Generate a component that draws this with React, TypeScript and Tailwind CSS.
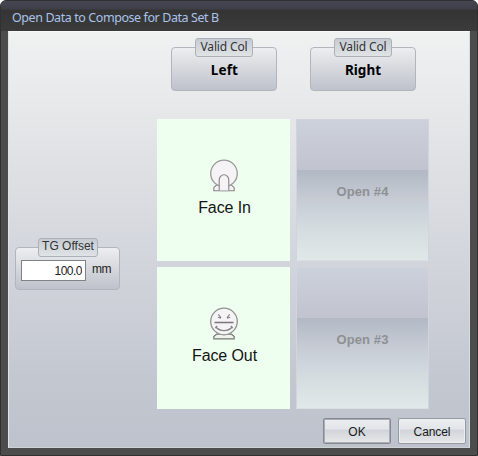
import React from "react";

const sans = "font-['Noto_Sans','Open_Sans',sans-serif]";
const arial = "font-['Liberation_Sans',Arial,sans-serif]";

function Group({ label, labelClass, className, children }: { label: string; labelClass: string; className: string; children: React.ReactNode }) {
  return (
    <fieldset className={`relative rounded-[4px] border border-[#b2b5bc] bg-linear-to-b from-[#eceef0] to-[#bfc2cb] ${className}`}>
      <div className={`absolute -top-[10px] flex h-[19px] justify-center rounded-[3px] border border-[#acb0b8] bg-linear-to-b from-[#c6cbd2] to-[#e0e4e6] leading-[15px] text-[#333] whitespace-nowrap ${labelClass}`}>
        {label}
      </div>
      {children}
    </fieldset>
  );
}

function FaceIn() {
  return (
    <svg width="30" height="34" viewBox="0 0 30 34" fill="#f5f3f5" stroke="#858585" strokeWidth="1.1">
      <path d="M7.500 26l-2.700 2.700v3.100h20.400v-3.100L22.500 26z" />
      <circle cx="15" cy="14.500" r="13.300" stroke="#999" strokeWidth="1.300" />
      <path d="M10.200 31.800V20.800a4.800 5 0 0 1 9.600 0v11" />
      <path d="M10.800 31.800h8.400" stroke="#b5b5b5" />
    </svg>
  );
}

function FaceOut() {
  return (
    <svg width="30" height="34" viewBox="0 0 30 34" fill="none" stroke="#777" strokeWidth="1.2">
      <path d="M7.500 27.200L4.800 29.500v2.300h20.400v-2.300l-2.700-2.300z" fill="#eef3ee" />
      <circle cx="15" cy="14.500" r="13.300" fill="#f5f3f5" stroke="#929292" strokeWidth="1.300" />
      <path d="M9.300 7.300l2.700 3.600M20.700 7.300L18 10.900M9 10.200l3 1M21.200 10.200l-3.200 1" stroke="#858585" strokeWidth="1.100" />
      <path d="M5.500 15.500h19" stroke="#777" strokeWidth="1.600" />
      <path d="M7 20c4 4.800 12 4.800 16 0M6.300 20.900l1.800-1.800M23.700 20.900l-1.800-1.800" stroke="#858585" strokeWidth="1.400" />
    </svg>
  );
}

function FaceTile({ icon, label }: { icon: React.ReactNode; label: string }) {
  return (
    <div className="flex h-[142px] w-[133px] flex-col items-center bg-[#efffef] pt-[40px]">
      {icon}
      <span className="mt-[5px] pl-[2px] text-[16px] leading-[20px] tracking-[-0.100px] text-[#151515]">{label}</span>
    </div>
  );
}

function OpenTile({ label }: { label: string }) {
  return (
    <div className="flex h-[142px] w-[133px] items-center justify-center border border-[#d0d4dd] border-b-[#d8dee1] bg-[linear-gradient(to_bottom,#cdd1dc_0%,#c1c4cf_35.500%,#b3b9c4_36%,#c7ccd5_58%,#d4dbdf_76%,#e1e8e8_100%)]">
      <span className="pt-[3px] text-[13px] font-bold tracking-[0.120px] text-[#8e9093]">{label}</span>
    </div>
  );
}

function Button({ label, primary, className }: { label: string; primary?: boolean; className: string }) {
  return (
    <button className={`flex h-[26px] w-[68px] items-center justify-center rounded-[2px] border bg-[linear-gradient(to_bottom,#eceef0_0%,#e2e5e9_42%,#d1d4da_46%,#e6e8ea_100%)] pt-px text-[12px] text-[#181b20] ${primary ? "border-[#858992] shadow-[inset_0_0_0_1px_#a9adb4]" : "border-[#9599a1] shadow-[inset_0_0_0_1px_#eceef0]"}`}>
      <span className={className}>{label}</span>
    </button>
  );
}

export default function App() {
  return (
    <div className="h-[456px] w-[478px] bg-white">
      <div className={`flex h-full flex-col overflow-hidden rounded-t-[6px] border border-[#303030] bg-[#4c4c4c] ${arial}`}>
        <header className="-mx-px -mt-px h-[31px] shrink-0 border-t border-[#34353b] bg-[linear-gradient(to_bottom,#454651_0px,#3e3f49_8px,#343434_9px,#3b3b3b_30px)]">
          <h1 className={`pl-[12px] pt-[8px] text-[12.500px] leading-[17px] whitespace-nowrap text-[#a9c2ea] ${sans}`}>
            <span className="tracking-[-0.420px]">Open Data to Compose for Data Set B</span>
          </h1>
        </header>
        <main className="ml-[7px] flex h-[417px] w-[462px] shrink-0 flex-col border border-t-[#f7f8f8] border-r-[#d9dcdf] border-b-[#cfd3d6] border-l-[#e0e2e4] bg-[linear-gradient(to_bottom,#f0f1f1_0%,#e4e6e8_22%,#d3d6dc_53%,#c3c7d0_84%,#bec2cc_100%)]">
          <section className="flex pl-[162px] pt-[15px]">
            <Group label="Valid Col" className="h-[44px] w-[106px]" labelClass={`left-[23px] w-[58px] text-[12px] tracking-[-0.150px] ${sans}`}>
              <div className={`pl-px pt-[13px] text-center text-[13.500px] leading-[18px] font-bold tracking-[0.150px] text-black ${sans}`}>Left</div>
            </Group>
            <Group label="Valid Col" className="ml-[33px] h-[44px] w-[106px]" labelClass={`left-[23px] w-[58px] text-[12px] tracking-[-0.150px] ${sans}`}>
              <div className={`pt-[13px] text-center text-[13.500px] leading-[18px] font-bold text-black ${sans}`}>Right</div>
            </Group>
          </section>
          <section className="mt-[28px] flex">
            <div className="w-[148px] pl-[6px] pt-[128px]">
              <Group label="TG Offset" className="h-[43px] w-[105px]" labelClass="left-[22px] w-[60px] text-[12px]">
                <div className="flex items-center pl-[5px] pt-[12px]">
                  <input readOnly value="100.0" aria-label="TG Offset" className="h-[21px] w-[65px] border border-[#7f8388] bg-white pr-[3px] text-right text-[12px] tracking-[-0.500px] text-[#222]" />
                  <span className="-mt-[3px] ml-[6px] text-[12px] tracking-[-0.500px] text-[#222]">mm</span>
                </div>
              </Group>
            </div>
            <div className="flex flex-col gap-[6px]">
              <FaceTile icon={<FaceIn />} label="Face In" />
              <FaceTile icon={<FaceOut />} label="Face Out" />
            </div>
            <div className="ml-[6px] flex flex-col gap-[6px]">
              <OpenTile label="Open #4" />
              <OpenTile label="Open #3" />
            </div>
          </section>
          <footer className="mt-[9px] flex justify-end gap-[7px] pr-[3px]">
            <Button label="OK" primary className="" />
            <Button label="Cancel" className="tracking-[-0.100px]" />
          </footer>
        </main>
      </div>
    </div>
  );
}
